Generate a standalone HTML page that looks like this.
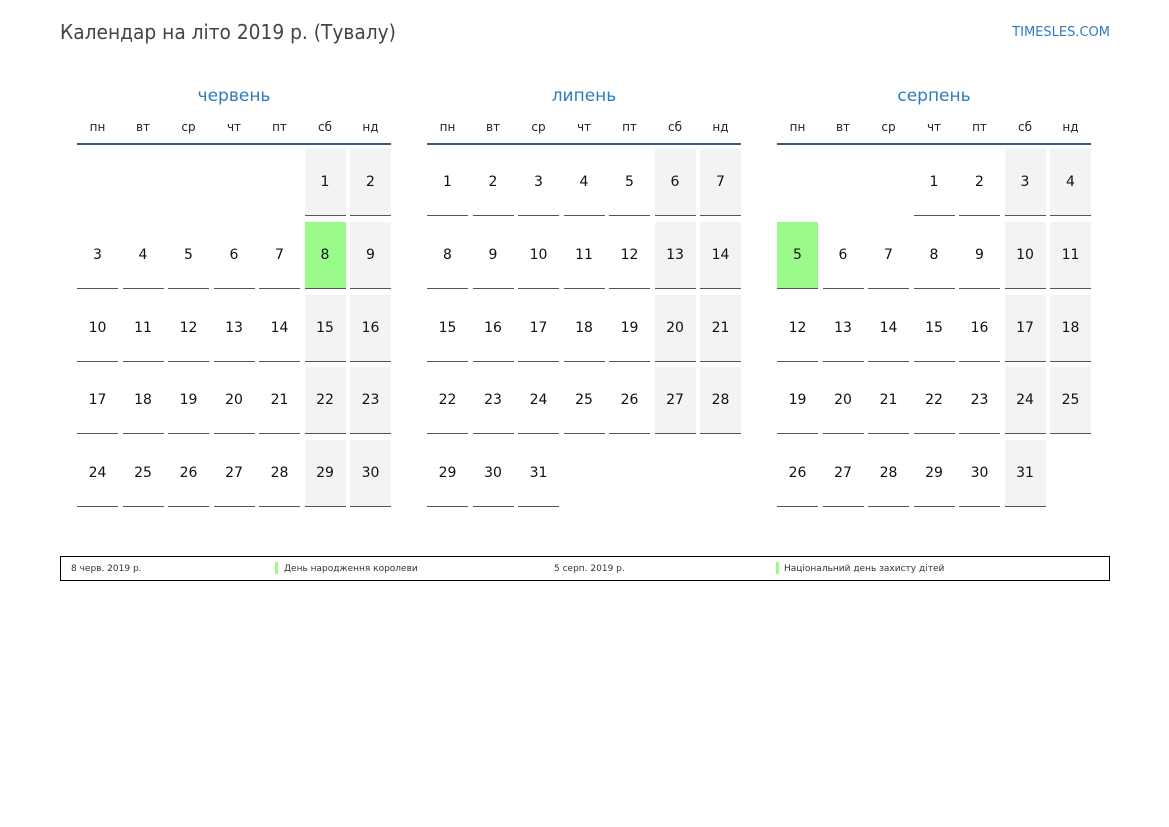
<!DOCTYPE html>
<html><head><meta charset="utf-8"><style>
body{margin:0;width:1169px;height:827px;background:#fff;font-family:"DejaVu Sans","Liberation Sans",sans-serif;position:relative;overflow:hidden}
.t{position:absolute;left:60px;top:20px;font-size:20.7px;color:#444;font-family:"DejaVu Sans Condensed","DejaVu Sans",sans-serif;font-stretch:condensed}
.s{position:absolute;right:59px;top:25px;font-size:13px;color:#2f7bbf}
.m{position:absolute;top:86px;width:314px}
.mt{text-align:center;font-size:17px;color:#2f7bbf;height:26px}
.wd{display:grid;grid-template-columns:repeat(7,41px);column-gap:4.5px;font-size:12px;color:#222;text-align:center;height:18px;margin-top:6px;border-bottom:2px solid #3d5a80;padding-bottom:7px;line-height:18px}
.g{display:grid;grid-template-columns:repeat(7,41px);grid-auto-rows:67px;column-gap:4.5px;row-gap:5.8px;margin-top:4px}
.g div{box-sizing:border-box;border-bottom:1.5px solid #555;font-size:14px;color:#111;text-align:center;line-height:66px}
.g .e{border:none}
.g .w{background:#f3f3f3}
.g .h{background:#9afa8a}
.lg{position:absolute;left:60px;top:556px;width:1048px;height:23px;border:1px solid #000;font-size:9px;color:#333}
.lg span{position:absolute;top:7px}
.bar{position:absolute;top:5px;width:3px;height:12px;background:#9afa8a}
</style></head><body>
<div class="t">Календар на літо 2019 р. (Тувалу)</div>
<div class="s">TIMESLES.COM</div>

<div class="m" style="left:77px"><div class="mt">червень</div>
<div class="wd"><span>пн</span><span>вт</span><span>ср</span><span>чт</span><span>пт</span><span>сб</span><span>нд</span></div>
<div class="g">
<div class="e"></div><div class="e"></div><div class="e"></div><div class="e"></div><div class="e"></div><div class="w">1</div><div class="w">2</div>
<div>3</div><div>4</div><div>5</div><div>6</div><div>7</div><div class="h">8</div><div class="w">9</div>
<div>10</div><div>11</div><div>12</div><div>13</div><div>14</div><div class="w">15</div><div class="w">16</div>
<div>17</div><div>18</div><div>19</div><div>20</div><div>21</div><div class="w">22</div><div class="w">23</div>
<div>24</div><div>25</div><div>26</div><div>27</div><div>28</div><div class="w">29</div><div class="w">30</div>
</div></div>

<div class="m" style="left:427px"><div class="mt">липень</div>
<div class="wd"><span>пн</span><span>вт</span><span>ср</span><span>чт</span><span>пт</span><span>сб</span><span>нд</span></div>
<div class="g">
<div>1</div><div>2</div><div>3</div><div>4</div><div>5</div><div class="w">6</div><div class="w">7</div>
<div>8</div><div>9</div><div>10</div><div>11</div><div>12</div><div class="w">13</div><div class="w">14</div>
<div>15</div><div>16</div><div>17</div><div>18</div><div>19</div><div class="w">20</div><div class="w">21</div>
<div>22</div><div>23</div><div>24</div><div>25</div><div>26</div><div class="w">27</div><div class="w">28</div>
<div>29</div><div>30</div><div>31</div>
</div></div>

<div class="m" style="left:777px"><div class="mt">серпень</div>
<div class="wd"><span>пн</span><span>вт</span><span>ср</span><span>чт</span><span>пт</span><span>сб</span><span>нд</span></div>
<div class="g">
<div class="e"></div><div class="e"></div><div class="e"></div><div>1</div><div>2</div><div class="w">3</div><div class="w">4</div>
<div class="h">5</div><div>6</div><div>7</div><div>8</div><div>9</div><div class="w">10</div><div class="w">11</div>
<div>12</div><div>13</div><div>14</div><div>15</div><div>16</div><div class="w">17</div><div class="w">18</div>
<div>19</div><div>20</div><div>21</div><div>22</div><div>23</div><div class="w">24</div><div class="w">25</div>
<div>26</div><div>27</div><div>28</div><div>29</div><div>30</div><div class="w">31</div>
</div></div>

<div class="lg">
<span style="left:10px">8 черв. 2019 р.</span>
<div class="bar" style="left:214px"></div><span style="left:223px">День народження королеви</span>
<span style="left:493px">5 серп. 2019 р.</span>
<div class="bar" style="left:715px"></div><span style="left:723px">Національний день захисту дітей</span>
</div>
</body></html>
